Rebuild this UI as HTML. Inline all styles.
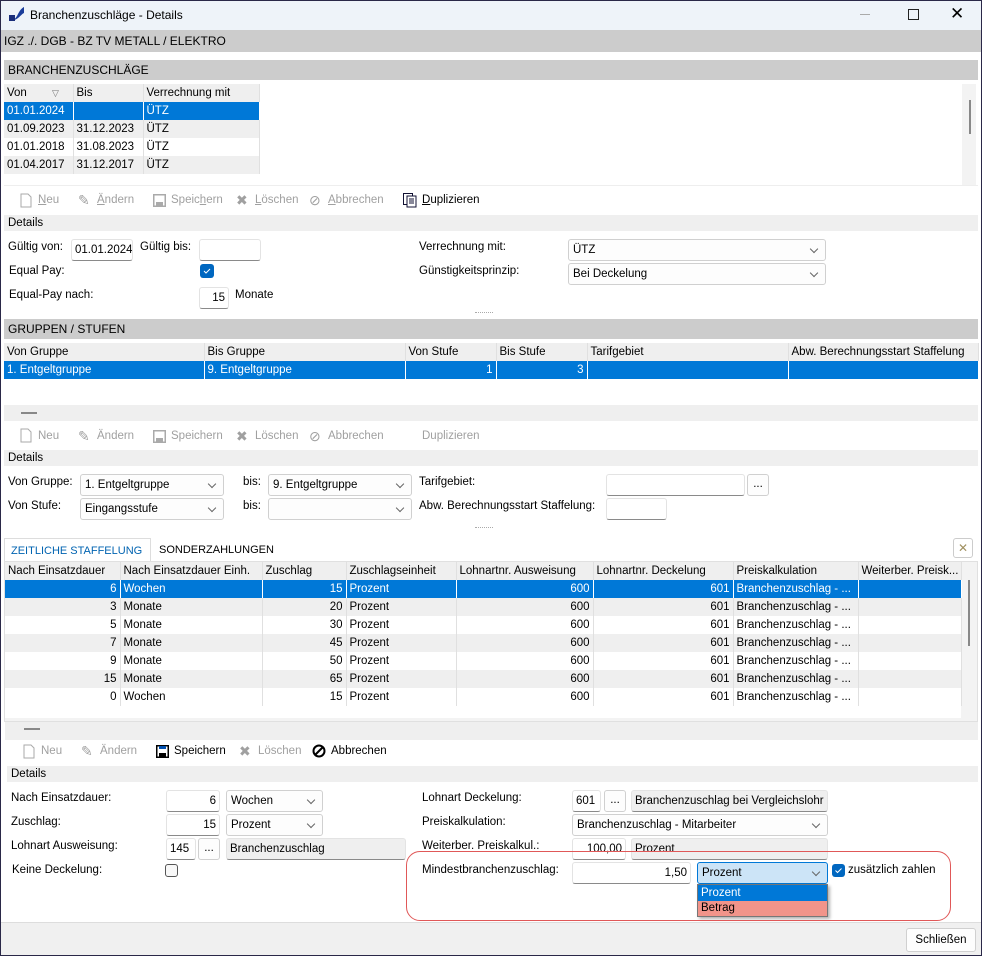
<!DOCTYPE html>
<html><head><meta charset="utf-8">
<style>
*{box-sizing:border-box;margin:0;padding:0}
body{width:982px;height:956px;overflow:hidden;background:#fff;font-family:"Liberation Sans",sans-serif;font-size:11.5px;color:#000;position:relative}
.a{position:absolute;white-space:nowrap}
.bar{position:absolute;background:#cccccc;font-size:12px;padding-left:4px;line-height:20px}
.dbar{position:absolute;background:#efefef;line-height:16px;padding-left:4px;left:4px;width:974px}
.in{position:absolute;background:#fff;border:1px solid #e3e3e3;border-bottom:1px solid #8a8a8a;border-radius:3px;line-height:20px;padding:0 3px;height:22px;white-space:nowrap;overflow:hidden}
.sel{position:absolute;background:#fdfdfd;border:1px solid #d0d0d0;border-radius:3px;line-height:20px;padding:0 4px;height:22px;white-space:nowrap}
.sel:after{content:"";position:absolute;right:8px;top:6px;width:5px;height:5px;border-right:1px solid #666;border-bottom:1px solid #666;transform:rotate(45deg)}
.btn{position:absolute;background:#fdfdfd;border:1px solid #d0d0d0;border-radius:3px;text-align:center;line-height:18px;height:22px}
.gbox{position:absolute;background:#efefef;border:1px solid #e3e3e3;border-bottom:1px solid #8a8a8a;border-radius:3px;line-height:20px;padding:0 3px;height:22px;white-space:nowrap;overflow:hidden}
.r{text-align:right}
table{position:absolute;border-collapse:collapse;table-layout:fixed}
td{height:18px;padding:0 3px;white-space:nowrap;overflow:hidden;border-right:1px solid #e0e0e0;line-height:18px}
tr.h td{background:#efefef}
tr.s td{background:#0078d7;color:#fff;border-right:1px solid #fff}
tr.g td{background:#efefef}
.tb{position:absolute;color:#a0a0a0;white-space:nowrap}
.tb.k{color:#000}
.chk{position:absolute;width:14px;height:14px;border-radius:3px}
.dots{position:absolute;width:18px;border-top:1px dotted #aaa}
</style></head><body>
<div class="a" style="left:0;top:0;width:982px;height:956px;border:1px solid #2a2848;z-index:9;pointer-events:none"></div>
<div class="a" style="left:0;top:0;width:982px;height:30px;background:#eef3f9"></div>
<svg class="a" style="left:8px;top:6px" width="17" height="16"><path d="M1 15 C6 15 8 12 10 8 C12 4 14 2 16 1 L16 7 C12 9 10 15 1 15Z" fill="#1a3c9a"/><rect x="1" y="9" width="6" height="6" fill="#1a2d7a"/></svg>
<div class="a" style="left:30px;top:8px;font-size:12px">Branchenzuschläge - Details</div>
<div class="a" style="left:860px;top:14px;width:10px;border-top:1px solid #aaa"></div>
<div class="a" style="left:908px;top:9px;width:11px;height:11px;border:1.5px solid #222"></div>
<div class="a" style="left:950px;top:4px;font-size:17px">✕</div>

<div class="bar" style="left:0;top:30px;width:982px;height:22px;line-height:22px">IGZ ./. DGB - BZ TV METALL / ELEKTRO</div>
<div class="bar" style="left:4px;top:60px;width:974px;height:20px">BRANCHENZUSCHLÄGE</div>

<table style="left:4px;top:84px;width:255px">
<colgroup><col style="width:69px"><col style="width:70px"><col style="width:116px"></colgroup>
<tr class="h"><td>Von <span style="color:#777;font-size:9px;margin-left:22px">▽</span></td><td>Bis</td><td>Verrechnung mit</td></tr>
<tr class="s"><td>01.01.2024</td><td></td><td>ÜTZ</td></tr>
<tr class="g"><td>01.09.2023</td><td>31.12.2023</td><td>ÜTZ</td></tr>
<tr><td>01.01.2018</td><td>31.08.2023</td><td>ÜTZ</td></tr>
<tr class="g"><td>01.04.2017</td><td>31.12.2017</td><td>ÜTZ</td></tr>
</table>
<div class="a" style="left:962px;top:84px;width:14px;height:101px;background:#f3f3f3"></div>
<div class="a" style="left:969px;top:100px;width:2px;height:34px;background:#888"></div>
<div class="a" style="left:4px;top:185px;width:974px;border-top:1px solid #eee"></div>

<svg class="a" style="left:20px;top:193px" width="12" height="15"><path d="M1 1H8L11 4V14H1Z" fill="none" stroke="#aaa"/></svg>
<div class="tb" style="left:38px;top:194px"><u>N</u>eu</div>
<div class="tb" style="left:78px;top:192px;font-size:14px">✎</div>
<div class="tb" style="left:97px;top:194px"><u>Ä</u>ndern</div>
<svg class="a" style="left:153px;top:194px" width="13" height="13"><rect x="0.5" y="0.5" width="12" height="12" fill="none" stroke="#aaa" stroke-width="2"/><rect x="3" y="8" width="7" height="5" fill="#aaa"/></svg>
<div class="tb" style="left:171px;top:194px">Speic<u>h</u>ern</div>
<div class="tb" style="left:236px;top:192px;font-size:14px">✖</div>
<div class="tb" style="left:255px;top:194px"><u>L</u>öschen</div>
<div class="tb" style="left:309px;top:192px;font-size:14px">⊘</div>
<div class="tb" style="left:328px;top:194px"><u>A</u>bbrechen</div>
<svg class="a" style="left:403px;top:193px" width="14" height="15"><rect x="0.5" y="0.5" width="9" height="11" fill="#fff" stroke="#113"/><rect x="4" y="3" width="9" height="11" fill="#fff" stroke="#113"/><path d="M6 6H11M6 8H11M6 10H11" stroke="#113"/></svg>
<div class="tb k" style="left:422px;top:194px"><u>D</u>uplizieren</div>

<div class="dbar" style="top:215px">Details</div>
<div class="a" style="left:8px;top:241px">Gültig von:</div>
<div class="in" style="left:71px;top:239px;width:62px">01.01.2024</div>
<div class="a" style="left:140px;top:241px">Gültig bis:</div>
<div class="in" style="left:199px;top:239px;width:62px"></div>
<div class="a" style="left:9px;top:265px">Equal Pay:</div>
<div class="chk" style="left:200px;top:264px;background:#0067c0"><svg width="14" height="14"><path d="M4 7L6 9L10 5" stroke="#fff" fill="none"/></svg></div>
<div class="a" style="left:9px;top:289px">Equal-Pay nach:</div>
<div class="in r" style="left:199px;top:287px;width:30px">15</div>
<div class="a" style="left:235px;top:289px">Monate</div>
<div class="a" style="left:419px;top:241px">Verrechnung mit:</div>
<div class="sel" style="left:568px;top:239px;width:258px">ÜTZ</div>
<div class="a" style="left:419px;top:265px">Günstigkeitsprinzip:</div>
<div class="sel" style="left:568px;top:263px;width:258px">Bei Deckelung</div>
<div class="dots" style="left:475px;top:312px"></div>

<div class="bar" style="left:4px;top:319px;width:974px;height:20px">GRUPPEN / STUFEN</div>
<table style="left:4px;top:343px;width:974px">
<colgroup><col style="width:200px"><col style="width:201px"><col style="width:91px"><col style="width:91px"><col style="width:201px"><col style="width:190px"></colgroup>
<tr class="h"><td>Von Gruppe</td><td>Bis Gruppe</td><td>Von Stufe</td><td>Bis Stufe</td><td>Tarifgebiet</td><td>Abw. Berechnungsstart Staffelung</td></tr>
<tr class="s"><td>1. Entgeltgruppe</td><td>9. Entgeltgruppe</td><td class="r">1</td><td class="r">3</td><td></td><td></td></tr>
</table>
<div class="a" style="left:4px;top:405px;width:974px;height:16px;background:#efefef"></div>
<div class="a" style="left:21px;top:412px;width:16px;height:2px;background:#888"></div>

<svg class="a" style="left:20px;top:428px" width="12" height="15"><path d="M1 1H8L11 4V14H1Z" fill="none" stroke="#aaa"/></svg>
<div class="tb" style="left:38px;top:430px">Neu</div>
<div class="tb" style="left:78px;top:428px;font-size:14px">✎</div>
<div class="tb" style="left:97px;top:430px">Ändern</div>
<svg class="a" style="left:153px;top:430px" width="13" height="13"><rect x="0.5" y="0.5" width="12" height="12" fill="none" stroke="#aaa" stroke-width="2"/><rect x="3" y="8" width="7" height="5" fill="#aaa"/></svg>
<div class="tb" style="left:171px;top:430px">Speichern</div>
<div class="tb" style="left:236px;top:428px;font-size:14px">✖</div>
<div class="tb" style="left:255px;top:430px">Löschen</div>
<div class="tb" style="left:309px;top:428px;font-size:14px">⊘</div>
<div class="tb" style="left:328px;top:430px">Abbrechen</div>
<div class="tb" style="left:422px;top:430px">Duplizieren</div>

<div class="dbar" style="top:450px">Details</div>
<div class="a" style="left:8px;top:476px">Von Gruppe:</div>
<div class="sel" style="left:80px;top:474px;width:144px">1. Entgeltgruppe</div>
<div class="a" style="left:243px;top:476px">bis:</div>
<div class="sel" style="left:268px;top:474px;width:144px">9. Entgeltgruppe</div>
<div class="a" style="left:419px;top:476px">Tarifgebiet:</div>
<div class="in" style="left:606px;top:474px;width:139px"></div>
<div class="btn" style="left:747px;top:474px;width:22px">...</div>
<div class="a" style="left:8px;top:500px">Von Stufe:</div>
<div class="sel" style="left:80px;top:498px;width:144px">Eingangsstufe</div>
<div class="a" style="left:243px;top:500px">bis:</div>
<div class="sel" style="left:268px;top:498px;width:144px"></div>
<div class="a" style="left:419px;top:500px">Abw. Berechnungsstart Staffelung:</div>
<div class="in" style="left:606px;top:498px;width:61px"></div>
<div class="dots" style="left:475px;top:527px"></div>

<div class="a" style="left:4px;top:538px;width:147px;height:24px;border:1px solid #ddd;border-bottom:none;background:#fff;color:#0063b1;padding:6px 0 0 6px;font-size:11px">ZEITLICHE STAFFELUNG</div>
<div class="a" style="left:159px;top:544px;font-size:11px">SONDERZAHLUNGEN</div>
<div class="a" style="left:953px;top:538px;width:20px;height:20px;border:1px solid #ccc;border-radius:3px;color:#a09060;font-size:12px;text-align:center;line-height:18px">✕</div>
<div class="a" style="left:4px;top:561px;width:974px;height:161px;border:1px solid #e0e0e0;background:#f3f3f3"></div>
<div class="a" style="left:5px;top:562px;width:956px;height:156px;background:#fff"></div>
<table style="left:5px;top:562px;width:956px">
<colgroup><col style="width:115px"><col style="width:142px"><col style="width:84px"><col style="width:110px"><col style="width:137px"><col style="width:140px"><col style="width:125px"><col style="width:103px"></colgroup>
<tr class="h"><td>Nach Einsatzdauer</td><td>Nach Einsatzdauer Einh.</td><td>Zuschlag</td><td>Zuschlagseinheit</td><td>Lohnartnr. Ausweisung</td><td>Lohnartnr. Deckelung</td><td>Preiskalkulation</td><td>Weiterber. Preisk...</td></tr>
<tr class="s"><td class="r">6</td><td>Wochen</td><td class="r">15</td><td>Prozent</td><td class="r">600</td><td class="r">601</td><td>Branchenzuschlag - ...</td><td></td></tr>
<tr class="g"><td class="r">3</td><td>Monate</td><td class="r">20</td><td>Prozent</td><td class="r">600</td><td class="r">601</td><td>Branchenzuschlag - ...</td><td></td></tr>
<tr><td class="r">5</td><td>Monate</td><td class="r">30</td><td>Prozent</td><td class="r">600</td><td class="r">601</td><td>Branchenzuschlag - ...</td><td></td></tr>
<tr class="g"><td class="r">7</td><td>Monate</td><td class="r">45</td><td>Prozent</td><td class="r">600</td><td class="r">601</td><td>Branchenzuschlag - ...</td><td></td></tr>
<tr><td class="r">9</td><td>Monate</td><td class="r">50</td><td>Prozent</td><td class="r">600</td><td class="r">601</td><td>Branchenzuschlag - ...</td><td></td></tr>
<tr class="g"><td class="r">15</td><td>Monate</td><td class="r">65</td><td>Prozent</td><td class="r">600</td><td class="r">601</td><td>Branchenzuschlag - ...</td><td></td></tr>
<tr><td class="r">0</td><td>Wochen</td><td class="r">15</td><td>Prozent</td><td class="r">600</td><td class="r">601</td><td>Branchenzuschlag - ...</td><td></td></tr>
</table>
<div class="a" style="left:968px;top:580px;width:2px;height:66px;background:#888"></div>

<div class="a" style="left:5px;top:722px;width:973px;height:18px;background:#efefef"></div>
<div class="a" style="left:24px;top:728px;width:16px;height:2px;background:#888"></div>
<svg class="a" style="left:23px;top:744px" width="12" height="15"><path d="M1 1H8L11 4V14H1Z" fill="none" stroke="#aaa"/></svg>
<div class="tb" style="left:41px;top:745px">Neu</div>
<div class="tb" style="left:81px;top:743px;font-size:14px">✎</div>
<div class="tb" style="left:100px;top:745px">Ändern</div>
<svg class="a" style="left:156px;top:745px" width="13" height="13"><rect x="0.5" y="0.5" width="12" height="12" fill="none" stroke="#000" stroke-width="2"/><rect x="3" y="8" width="7" height="5" fill="#000"/><rect x="3" y="1" width="7" height="3" fill="#0050b0"/></svg>
<div class="tb k" style="left:174px;top:745px">Speichern</div>
<div class="tb" style="left:239px;top:743px;font-size:14px">✖</div>
<div class="tb" style="left:258px;top:745px">Löschen</div>
<svg class="a" style="left:312px;top:744px" width="14" height="14"><circle cx="7" cy="7" r="5.5" fill="none" stroke="#000" stroke-width="2"/><path d="M3 11L11 3" stroke="#000" stroke-width="2"/></svg>
<div class="tb k" style="left:331px;top:745px">Abbrechen</div>

<div class="dbar" style="top:766px;left:7px;width:971px">Details</div>
<div class="a" style="left:11px;top:792px">Nach Einsatzdauer:</div>
<div class="in r" style="left:166px;top:790px;width:54px">6</div>
<div class="sel" style="left:226px;top:790px;width:97px">Wochen</div>
<div class="a" style="left:11px;top:816px">Zuschlag:</div>
<div class="in r" style="left:166px;top:814px;width:54px">15</div>
<div class="sel" style="left:226px;top:814px;width:97px">Prozent</div>
<div class="a" style="left:11px;top:840px">Lohnart Ausweisung:</div>
<div class="in" style="left:166px;top:838px;width:30px">145</div>
<div class="btn" style="left:198px;top:838px;width:22px">...</div>
<div class="gbox" style="left:226px;top:838px;width:180px">Branchenzuschlag</div>
<div class="a" style="left:12px;top:864px">Keine Deckelung:</div>
<div class="chk" style="left:165px;top:864px;border:1px solid #555;background:#f8f8f8;width:13px;height:13px"></div>

<div class="a" style="left:422px;top:792px">Lohnart Deckelung:</div>
<div class="in" style="left:572px;top:790px;width:29px">601</div>
<div class="btn" style="left:604px;top:790px;width:22px">...</div>
<div class="gbox" style="left:631px;top:790px;width:197px">Branchenzuschlag bei Vergleichslohr</div>
<div class="a" style="left:422px;top:816px">Preiskalkulation:</div>
<div class="sel" style="left:572px;top:814px;width:256px">Branchenzuschlag - Mitarbeiter</div>
<div class="a" style="left:422px;top:840px">Weiterber. Preiskalkul.:</div>
<div class="in r" style="left:572px;top:838px;width:54px">100,00</div>
<div class="gbox" style="left:631px;top:838px;width:197px">Prozent</div>
<div class="a" style="left:422px;top:864px">Mindestbranchenzuschlag:</div>
<div class="in r" style="left:572px;top:862px;width:119px">1,50</div>
<div class="sel" style="left:697px;top:862px;width:131px;background:#cce4f7;border-color:#0078d7">Prozent</div>
<div class="a" style="left:697px;top:884px;width:131px;height:33px;border:1px solid #777;box-shadow:2px 2px 3px rgba(0,0,0,.3)">
<div style="background:#0078d7;color:#fff;height:16px;line-height:16px;padding-left:3px">Prozent</div>
<div style="background:#f1948a;height:15px;line-height:15px;padding-left:3px">Betrag</div></div>
<div class="chk" style="left:832px;top:864px;background:#0067c0;width:13px;height:13px"><svg width="13" height="13"><path d="M3.5 6.5L5.5 8.5L9.5 4.5" stroke="#fff" fill="none"/></svg></div>
<div class="a" style="left:848px;top:864px">zusätzlich zahlen</div>
<div class="a" style="left:406px;top:851px;width:545px;height:70px;border:1.5px solid #e05858;border-radius:14px"></div>

<div class="a" style="left:0;top:922px;width:982px;height:34px;background:#f0f0f0;border-top:1px solid #ddd"></div>
<div class="btn" style="left:906px;top:928px;width:70px;height:24px;line-height:22px">Schließen</div>
</body></html>
